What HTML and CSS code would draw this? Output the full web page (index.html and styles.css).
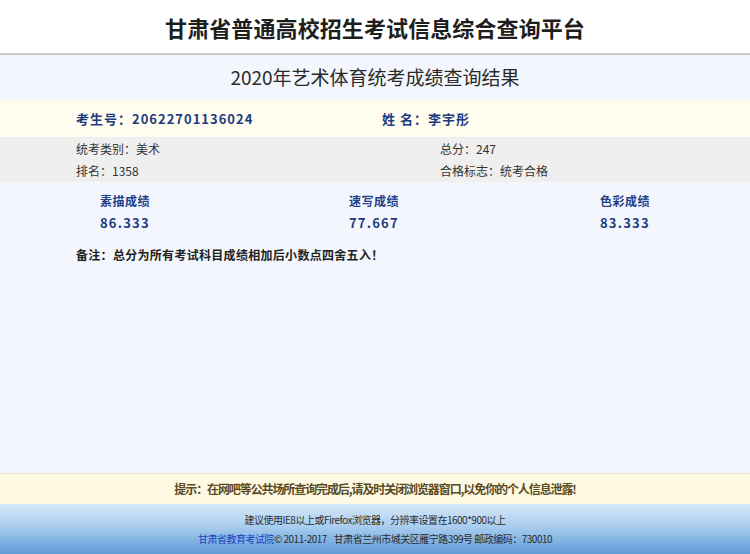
FILE: index.html
```html
<!DOCTYPE html>
<html lang="zh-CN">
<head>
  <meta charset="UTF-8">
  <title>甘肃省普通高校招生考试信息综合查询平台</title>
  <link rel="stylesheet" href="styles.css">
</head>
<body>
  <div class="page">
    <div class="top">
      <h1>甘肃省普通高校招生考试信息综合查询平台</h1>
    </div>

    <div class="main">
      <h2>2020年艺术体育统考成绩查询结果</h2>

      <div class="ident">
        <div class="col-left">考生号：20622701136024</div>
        <div class="col-right name">姓&nbsp;名：李宇彤</div>
      </div>

      <div class="info">
        <div class="col-left">统考类别：美术</div>
        <div class="col-right">总分：247</div>
        <div class="col-left">排名：1358</div>
        <div class="col-right">合格标志：统考合格</div>
      </div>

      <div class="scores">
        <div class="score">
          <div class="score-title">素描成绩</div>
          <div class="score-value">86.333</div>
        </div>
        <div class="score">
          <div class="score-title">速写成绩</div>
          <div class="score-value">77.667</div>
        </div>
        <div class="score">
          <div class="score-title">色彩成绩</div>
          <div class="score-value">83.333</div>
        </div>
      </div>

      <div class="note">备注：总分为所有考试科目成绩相加后小数点四舍五入！</div>
    </div>

    <div class="tip">提示：在网吧等公共场所查询完成后,请及时关闭浏览器窗口,以免你的个人信息泄露!</div>

    <div class="footer">
      <p>建议使用IE8以上或Firefox浏览器，分辨率设置在1600*900以上</p>
      <p><a href="#">甘肃省教育考试院</a>© 2011-2017 &nbsp;&nbsp; 甘肃省兰州市城关区雁宁路399号 邮政编码：730010</p>
    </div>
  </div>
</body>
</html>
```

FILE: styles.css
```css
html, body {
  margin: 0;
  padding: 0;
}

body {
  font-family: "Noto Sans CJK SC", "Noto Sans", sans-serif;
  color: #333;
  background-color: #f3f7fd;
}

.page {
  height: 554px;
  display: flex;
  flex-direction: column;
}

.top {
  height: 53px;
  background-color: #fff;
  border-bottom: 2px solid #c9cdd2;
  display: flex;
  align-items: center;
  justify-content: center;
}

h1 {
  margin: 0;
  font-size: 22px;
  font-weight: bold;
  color: #1e1e1e;
  letter-spacing: 0.1px;
}

.main {
  flex: 1;
  background-color: #f3f7fd;
}

h2 {
  margin: 0;
  height: 45px;
  line-height: 43px;
  text-align: center;
  font-size: 19px;
  font-weight: normal;
  color: #2a2a2a;
}

.ident {
  height: 37px;
  background-color: #fefdf0;
  display: grid;
  grid-template-columns: 306px 1fr;
  align-items: center;
  padding-left: 76px;
  font-size: 13px;
  font-weight: bold;
  color: #1f3b7c;
  letter-spacing: 1px;
}

.ident .name {
  letter-spacing: 1px;
}

.info {
  background-color: #efefef;
  display: grid;
  grid-template-columns: 364px 1fr;
  grid-auto-rows: 22px;
  align-items: center;
  padding: 0 0 1px 76px;
  font-size: 12px;
  color: #333;
}

.scores {
  display: grid;
  grid-template-columns: 249px 251px 1fr;
  padding: 9px 0 0 100px;
}

.score-title {
  font-size: 12px;
  font-weight: bold;
  color: #22408a;
  line-height: 20px;
  letter-spacing: 0.5px;
}

.score-value {
  font-size: 13px;
  font-weight: bold;
  color: #1f3b7c;
  line-height: 24px;
  letter-spacing: 1.2px;
}

.note {
  padding: 11px 0 0 76px;
  font-size: 12px;
  font-weight: bold;
  color: #222;
  letter-spacing: 0.3px;
}

.tip {
  height: 30px;
  line-height: 30px;
  background-color: #fdf9e3;
  border-top: 1px solid #ece6cc;
  text-align: center;
  font-size: 12px;
  font-weight: bold;
  color: #5a4a1e;
  letter-spacing: -1.1px;
}

.footer {
  height: 50px;
  background: linear-gradient(to bottom, #d6e8f8 0%, #a9cdef 45%, #5e9bd6 100%);
  text-align: center;
  font-size: 10px;
  color: #2c2c2c;
  padding-top: 6px;
  box-sizing: border-box;
}

.footer p {
  margin: 0;
  line-height: 19px;
  letter-spacing: -0.5px;
}

.footer a {
  color: #1b3fbf;
  text-decoration: none;
}
```
